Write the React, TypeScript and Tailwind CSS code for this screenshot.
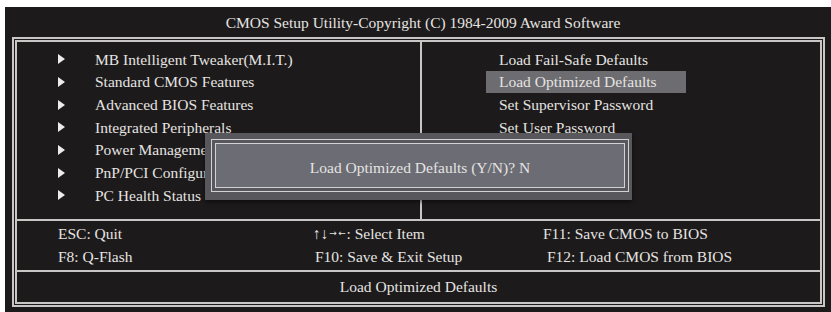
import React from "react";

const leftItems = [
  "MB Intelligent Tweaker(M.I.T.)",
  "Standard CMOS Features",
  "Advanced BIOS Features",
  "Integrated Peripherals",
  "Power Manageme",
  "PnP/PCI Configur",
  "PC Health Status",
];

const rightItems = [
  "Load Fail-Safe Defaults",
  "Load Optimized Defaults",
  "Set Supervisor Password",
  "Set User Password",
];

const Bullet = () => (
  <svg width="7" height="10" viewBox="0 0 7 10" className="shrink-0">
    <polygon points="0,0 7,5 0,10" fill="#ececec" />
  </svg>
);

export default function App() {
  return (
    <div
      className="relative w-[831px] h-[312px] bg-white pl-[5px] pt-[7px] overflow-hidden text-[#e6e4e2] text-[15.5px] leading-none"
      style={{ fontFamily: '"Liberation Serif", "Times New Roman", serif' }}
    >
      <div className="w-[826px] h-[305px] bg-[#1c1a1a] flex flex-col">
        {/* title */}
        <div className="h-[30px] flex items-center justify-center pl-[10px] pt-[1px]">
          CMOS Setup Utility-Copyright (C) 1984-2009 Award Software
        </div>

        {/* double frame */}
        <div className="ml-[7px] w-[813px] h-[270px] border-2 border-[#c9c7c5] p-[1px]">
          <div className="w-full h-full border-2 border-[#c9c7c5] flex flex-col">
            {/* menu section */}
            <div className="h-[177px] flex">
              <div className="w-[403px] pt-[6px] flex flex-col">
                {leftItems.map((t) => (
                  <div key={t} className="h-[22.7px] flex items-center pl-[41px]">
                    <Bullet />
                    <span className="ml-[30px] whitespace-nowrap">{t}</span>
                  </div>
                ))}
              </div>
              <div className="w-[2px] bg-[#c9c7c5]" />
              <div className="flex-1 pt-[6px] flex flex-col pl-[64px]">
                {rightItems.map((t, i) => (
                  <div
                    key={t}
                    className={`h-[22.7px] w-[200px] flex items-center pl-[13px] whitespace-nowrap ${
                      i === 1 ? "bg-[#6d6c70]" : ""
                    }`}
                  >
                    {t}
                  </div>
                ))}
              </div>
            </div>

            <div className="h-[2px] bg-[#c9c7c5]" />

            {/* help section */}
            <div className="h-[49px] pt-[1px] flex flex-col">
              <div className="h-[23px] flex items-center">
                <span className="w-[296px] pl-[41px]">ESC: Quit</span>
                <span className="w-[230px] flex items-center whitespace-nowrap">
                  <span>↑↓</span>
                  <span className="w-[9px] flex justify-center font-['DejaVu_Sans',sans-serif] text-[9px]">→</span>
                  <span className="w-[9px] flex justify-center font-['DejaVu_Sans',sans-serif] text-[9px]">←</span>
                  <span>: Select Item</span>
                </span>
                <span>F11: Save CMOS to BIOS</span>
              </div>
              <div className="h-[23px] flex items-center">
                <span className="w-[298px] pl-[41px]">F8: Q-Flash</span>
                <span className="w-[232px]">F10: Save &amp; Exit Setup</span>
                <span>F12: Load CMOS from BIOS</span>
              </div>
            </div>

            <div className="h-[2px] bg-[#c9c7c5]" />

            {/* status */}
            <div className="flex-1 flex items-center justify-center">Load Optimized Defaults</div>
          </div>
        </div>
      </div>

      {/* confirm dialog */}
      <div className="absolute left-[205px] top-[133px] w-[427px] h-[67px] bg-[#58585c] pl-[6px] pt-[6px] pr-[3px] pb-[8px] shadow-[0_2px_4px_rgba(0,0,0,0.5)]">
        <div className="w-full h-full border-[1.5px] border-[#d2d2d4] p-[3px]">
          <div className="w-full h-full border-[1.5px] border-[#d2d2d4] bg-[#6b6c74] flex items-center justify-center pt-[4px]">
            Load Optimized Defaults (Y/N)? N
          </div>
        </div>
      </div>
    </div>
  );
}
